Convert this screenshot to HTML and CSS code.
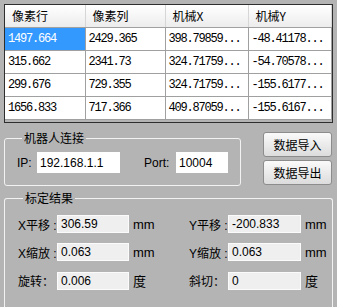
FILE: index.html
```html
<!DOCTYPE html>
<html lang="zh-CN">
<head>
  <meta charset="UTF-8" />
  <title>标定</title>
  <link rel="stylesheet" href="styles.css">
</head>
<body>
  <div class="app">
    <div class="grid-box">
      <table class="data">
        <thead>
          <tr>
            <th>像素行</th>
            <th>像素列</th>
            <th>机械X</th>
            <th>机械Y</th>
          </tr>
        </thead>
        <tbody>
          <tr>
            <td class="selected">1497.664</td>
            <td>2429.365</td>
            <td>398.79859...</td>
            <td>-48.41178...</td>
          </tr>
          <tr>
            <td>315.662</td>
            <td>2341.73</td>
            <td>324.71759...</td>
            <td>-54.70578...</td>
          </tr>
          <tr>
            <td>299.676</td>
            <td>729.355</td>
            <td>324.71759...</td>
            <td>-155.6177...</td>
          </tr>
          <tr>
            <td>1656.833</td>
            <td>717.366</td>
            <td>409.87059...</td>
            <td>-155.6167...</td>
          </tr>
        </tbody>
      </table>
    </div>

    <div class="middle">
      <fieldset class="group conn">
        <legend>机器人连接</legend>
        <div class="conn-row">
          <label class="ip-label" for="ip">IP:</label>
          <input type="text" id="ip" class="ip-input" value="192.168.1.1" />
          <label class="port-label" for="port">Port:</label>
          <input type="text" id="port" class="port-input" value="10004" />
        </div>
      </fieldset>
      <div class="buttons">
        <button>数据导入</button>
        <button>数据导出</button>
      </div>
    </div>

    <fieldset class="group result">
      <legend>标定结果</legend>
      <div class="result-grid">
        <span class="lbl">X平移 :</span>
        <span class="val">306.59</span>
        <span class="unit">mm</span>
        <span class="lbl lbl-right">Y平移 :</span>
        <span class="val">-200.833</span>
        <span class="unit">mm</span>

        <span class="lbl">X缩放 :</span>
        <span class="val">0.063</span>
        <span class="unit">mm</span>
        <span class="lbl lbl-right">Y缩放 :</span>
        <span class="val">0.063</span>
        <span class="unit">mm</span>

        <span class="lbl">旋转：</span>
        <span class="val">0.006</span>
        <span class="unit">度</span>
        <span class="lbl lbl-right">斜切：</span>
        <span class="val">0</span>
        <span class="unit">度</span>
      </div>
    </fieldset>
  </div>
</body>
</html>
```

FILE: styles.css
```css
body {
  margin: 0;
  background-color: #b4b4b4;
  font-family: "Liberation Sans", "Noto Sans CJK SC", sans-serif;
  font-size: 12px;
  color: #000;
}

.app {
  padding: 4px 4px 0 4px;
}

/* tabela de pontos */
.grid-box {
  height: 119px;
  box-sizing: border-box;
  border: 1px solid #2e2e2e;
  background-color: #b4b4b4;
}

.data {
  border-collapse: collapse;
  table-layout: fixed;
  width: 326px;
  background-color: #fff;
}

.data th {
  height: 22px;
  padding: 0 0 0 7px;
  text-align: left;
  font-family: "Noto Sans CJK SC", sans-serif;
  font-weight: normal;
  font-size: 12px;
  background: linear-gradient(#ffffff, #ececec);
  border-right: 1px solid #d6d6d6;
  border-bottom: 1px solid #a0a0a0;
  box-sizing: border-box;
}

.data th:nth-child(1),
.data th:nth-child(2) {
  width: 80px;
}

.data th:nth-child(3),
.data th:nth-child(4) {
  width: 83px;
}

.data td {
  height: 23px;
  box-sizing: border-box;
  padding: 0 0 0 3px;
  font-family: "Liberation Mono", monospace;
  font-size: 12px;
  letter-spacing: -1.2px;
  border-right: 1px solid #a0a0a0;
  border-bottom: 1px solid #a0a0a0;
  white-space: nowrap;
  overflow: hidden;
}

.data td.selected {
  background-color: #3399ff;
  color: #fff;
}

/* meio: conexao + botoes */
.middle {
  display: flex;
  justify-content: space-between;
  margin-top: 8px;
}

.group {
  margin: 0;
  padding: 0;
  border: 1px solid #f2f2f2;
  border-radius: 3px;
}

.group legend {
  margin-left: 5px;
  padding: 0 2px;
  font-family: "Noto Sans CJK SC", sans-serif;
  font-size: 12px;
  line-height: 14px;
}

.conn {
  width: 237px;
  box-sizing: border-box;
  padding: 7px 0 12px 12px;
}

.conn-row {
  display: flex;
  align-items: center;
}

.ip-label {
  width: 20px;
}

.port-label {
  width: 32px;
  margin-left: 24px;
}

.conn-row input {
  height: 21px;
  box-sizing: border-box;
  border: none;
  padding: 0 0 0 3px;
  background-color: #fff;
  font-family: "Liberation Sans", sans-serif;
  font-size: 12px;
  outline: none;
}

.ip-input {
  width: 83px;
}

.port-input {
  width: 52px;
}

.buttons {
  display: flex;
  flex-direction: column;
  gap: 3px;
  margin-top: 1px;
  margin-right: 1px;
}

.buttons button {
  width: 69px;
  height: 25px;
  border: 1px solid #8c8c8c;
  border-radius: 3px;
  background: linear-gradient(#fafafa, #dcdcdc);
  font-family: "Noto Sans CJK SC", sans-serif;
  font-size: 12px;
  padding: 0;
  cursor: pointer;
}

/* resultado: a moldura continua abaixo da janela */
.result {
  margin-top: 5px;
  padding: 10px 0 18px 13px;
  border-bottom: none;
  border-radius: 3px 3px 0 0;
}

.result-grid {
  display: grid;
  grid-template-columns: 39px 72px 41px 58px 73px auto;
  row-gap: 10px;
  align-items: center;
}

.lbl {
  font-family: "Liberation Sans", "Noto Sans CJK SC", sans-serif;
  white-space: nowrap;
}

.lbl-right {
  padding-left: 19px;
}

.val {
  height: 18px;
  line-height: 16px;
  box-sizing: border-box;
  border: 1px solid #fbfbfb;
  background-color: #efefef;
  padding-left: 3px;
}

.unit {
  padding-left: 4px;
  font-family: "Liberation Sans", "Noto Sans CJK SC", sans-serif;
  font-size: 13px;
}
```
